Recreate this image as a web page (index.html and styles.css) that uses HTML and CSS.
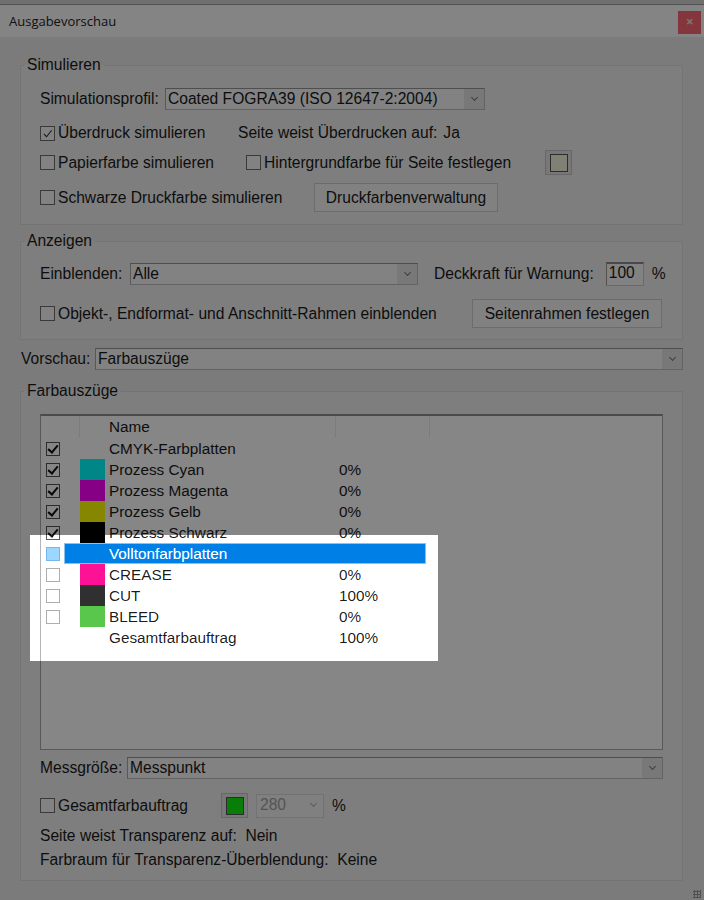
FILE: index.html
```html
<!doctype html>
<html>
<head>
    <meta charset="utf-8">
    <title>Ausgabevorschau</title>
    <link rel="stylesheet" href="styles.css">
</head>
<body>
<div class="window">
    <div class="titlebar">
        <span class="title">Ausgabevorschau</span>
        <button class="close">&#x2715;</button>
    </div>
    <div class="dialog">
        <fieldset class="group">
            <legend>Simulieren</legend>
            <div class="group-body">
                <div class="row r-profile">
                    <span class="label l-profile">Simulationsprofil:</span>
                    <div class="select w-profile"><span class="value">Coated FOGRA39 (ISO 12647-2:2004)</span><span class="arrow"></span></div>
                </div>
                <div class="row r-overprint">
                    <label class="check c-overprint"><span class="box"><svg viewBox="0 0 14 14"><polyline points="3,7.5 6,10.5 11.5,3.5"/></svg></span>Überdruck simulieren</label>
                    <span>Seite weist Überdrucken auf:</span>
                    <span class="val">Ja</span>
                </div>
                <div class="row r-paper">
                    <label class="check c-paper"><span class="box"></span>Papierfarbe simulieren</label>
                    <label class="check c-bg"><span class="box"></span>Hintergrundfarbe für Seite festlegen</label>
                    <button class="swatch"><span class="chip chip-paper"></span></button>
                </div>
                <div class="row r-black">
                    <label class="check c-black"><span class="box"></span>Schwarze Druckfarbe simulieren</label>
                    <button class="btn b-inks">Druckfarbenverwaltung</button>
                </div>
            </div>
        </fieldset>

        <fieldset class="group g-show">
            <legend>Anzeigen</legend>
            <div class="group-body">
                <div class="row r-show">
                    <span class="label l-show">Einblenden:</span>
                    <div class="select w-show"><span class="value">Alle</span><span class="arrow"></span></div>
                    <span class="l-opacity">Deckkraft für Warnung:</span>
                    <div class="input w-opacity">100</div>
                    <span class="unit">%</span>
                </div>
                <div class="row r-frames">
                    <label class="check c-frames"><span class="box"></span>Objekt-, Endformat- und Anschnitt-Rahmen einblenden</label>
                    <button class="btn b-frames">Seitenrahmen festlegen</button>
                </div>
            </div>
        </fieldset>

        <div class="row r-preview">
            <span class="label l-preview">Vorschau:</span>
            <div class="select w-preview"><span class="value">Farbauszüge</span><span class="arrow"></span></div>
        </div>

        <fieldset class="group g-seps">
            <legend>Farbauszüge</legend>
            <div class="group-body">
                <div class="list">
                    <div class="list-head">
                        <span class="col-check"></span>
                        <span class="col-swatch"></span>
                        <span class="col-name">Name</span>
                        <span class="col-pct"></span>
                        <span class="col-rest"></span>
                    </div>
                    <div class="list-row">
                        <span class="col-check"><span class="lbox on"></span></span>
                        <span class="col-swatch"></span>
                        <span class="col-name">CMYK-Farbplatten</span>
                        <span class="col-pct"></span>
                    </div>
                    <div class="list-row">
                        <span class="col-check"><span class="lbox on"></span></span>
                        <span class="col-swatch sw-cyan"></span>
                        <span class="col-name">Prozess Cyan</span>
                        <span class="col-pct">0%</span>
                    </div>
                    <div class="list-row">
                        <span class="col-check"><span class="lbox on"></span></span>
                        <span class="col-swatch sw-magenta"></span>
                        <span class="col-name">Prozess Magenta</span>
                        <span class="col-pct">0%</span>
                    </div>
                    <div class="list-row">
                        <span class="col-check"><span class="lbox on"></span></span>
                        <span class="col-swatch sw-yellow"></span>
                        <span class="col-name">Prozess Gelb</span>
                        <span class="col-pct">0%</span>
                    </div>
                    <div class="list-row">
                        <span class="col-check"><span class="lbox on"></span></span>
                        <span class="col-swatch sw-black"></span>
                        <span class="col-name">Prozess Schwarz</span>
                        <span class="col-pct">0%</span>
                    </div>
                    <div class="list-row selected">
                        <span class="col-check"><span class="lbox partial"></span></span>
                        <span class="sel-bar">Volltonfarbplatten</span>
                    </div>
                    <div class="list-row">
                        <span class="col-check"><span class="lbox"></span></span>
                        <span class="col-swatch sw-crease"></span>
                        <span class="col-name">CREASE</span>
                        <span class="col-pct">0%</span>
                    </div>
                    <div class="list-row">
                        <span class="col-check"><span class="lbox"></span></span>
                        <span class="col-swatch sw-cut"></span>
                        <span class="col-name">CUT</span>
                        <span class="col-pct">100%</span>
                    </div>
                    <div class="list-row">
                        <span class="col-check"><span class="lbox"></span></span>
                        <span class="col-swatch sw-bleed"></span>
                        <span class="col-name">BLEED</span>
                        <span class="col-pct">0%</span>
                    </div>
                    <div class="list-row">
                        <span class="col-check"></span>
                        <span class="col-swatch"></span>
                        <span class="col-name">Gesamtfarbauftrag</span>
                        <span class="col-pct">100%</span>
                    </div>
                </div>

                <div class="row r-measure">
                    <span class="label l-measure">Messgröße:</span>
                    <div class="select w-measure"><span class="value">Messpunkt</span><span class="arrow"></span></div>
                </div>
                <div class="row r-total">
                    <label class="check c-total"><span class="box"></span>Gesamtfarbauftrag</label>
                    <button class="swatch"><span class="chip chip-green"></span></button>
                    <div class="select w-limit disabled"><span class="value">280</span><span class="arrow"></span></div>
                    <span class="unit">%</span>
                </div>
                <div class="info i-first">Seite weist Transparenz auf:&nbsp; Nein</div>
                <div class="info">Farbraum für Transparenz-Überblendung:&nbsp; Keine</div>
            </div>
        </fieldset>
    </div>
    <div class="grip"></div>
    <!-- highlighted area around the spot colour rows -->
    <div class="spotlight"></div>
</div>
</body>
</html>
```

FILE: styles.css
```css
html, body {
    margin: 0;
    padding: 0;
}
body {
    background: #d4d4d4;
    font-family: "Liberation Sans", Arial, sans-serif;
    font-size: 15.6px;
    color: #1a1a1a;
    overflow: hidden;
}
.window {
    position: relative;
    margin-top: 4px;
    width: 704px;
    height: 896px;
    background: #ebebeb;
    border-top: 1px solid #9a9a9a;
    box-sizing: border-box;
}
.titlebar {
    height: 32px;
    background: #fcfcfc;
    display: flex;
    align-items: center;
    justify-content: space-between;
    padding: 0 3px 0 9px;
}
.title {
    font-family: "Open Sans", "Noto Sans", sans-serif;
    font-size: 13px;
    color: #222;
}
.close {
    width: 23px;
    height: 23px;
    margin-top: 2px;
    border: none;
    background: #f96a72;
    color: #fbe2e2;
    font-size: 9px;
    font-weight: bold;
    padding: 0;
}
.dialog {
    padding: 19px 21px 0 20px;
}

/* group boxes */
.group {
    margin: 0;
    padding: 0;
    border: 1px solid #dcdcdc;
    background: #f0f0f0;
    min-width: 0;
}
.group legend {
    margin-left: 3px;
    padding: 0 3px;
    line-height: 18px;
    font-size: 15.6px;
}
.group-body {
    padding: 0 19px 12px 19px;
}
.g-show {
    margin-top: 7px;
}
.g-show .group-body {
    padding-bottom: 11px;
}
.g-seps {
    margin-top: 12px;
}
.g-seps .group-body {
    padding-bottom: 11px;
}

.row {
    display: flex;
    align-items: center;
    white-space: nowrap;
}
.row > * {
    flex-shrink: 0;
}
.r-profile { height: 22px; margin-top: 14px; }
.r-overprint { height: 22px; margin-top: 12px; }
.r-paper { height: 25px; margin-top: 6px; }
.r-black { height: 29px; margin-top: 8px; }
.r-show { height: 24px; margin-top: 12px; }
.r-frames { height: 29px; margin-top: 13px; }
.r-preview { height: 22px; margin-top: 8px; }
.r-measure { height: 22px; margin-top: 7px; }
.r-total { height: 25px; margin-top: 14px; }

.val {
    margin-left: 6px;
}

/* checkboxes */
.check {
    display: flex;
    align-items: center;
}
.box {
    width: 13px;
    height: 13px;
    border: 1px solid #6e6e6e;
    background: #f8f8f8;
    margin-right: 3px;
    display: flex;
}
.box svg {
    width: 13px;
    height: 13px;
    fill: none;
    stroke: #333;
    stroke-width: 1.2;
}
.c-overprint { width: 198px; }
.c-paper { width: 206px; }
.c-bg { width: 299px; }
.c-black { width: 274px; }
.c-frames { width: 432px; }
.c-total { width: 181px; }

/* dropdowns */
.select {
    height: 22px;
    box-sizing: border-box;
    display: flex;
    background: #f7f7f7;
    border: 1px solid #bcbcbc;
    border-top-color: #959595;
    border-left-color: #a8a8a8;
}
.select .value {
    flex: 1;
    padding-left: 2px;
    line-height: 19px;
    overflow: hidden;
}
.select .arrow {
    width: 20px;
    background: #e4e4e4;
    position: relative;
}
.select .arrow::after {
    content: "";
    position: absolute;
    left: 8px;
    top: 6px;
    width: 4px;
    height: 4px;
    border-right: 1px solid #777;
    border-bottom: 1px solid #777;
    transform: rotate(45deg);
}
.w-profile { width: 320px; }
.w-show { width: 288px; }
.w-preview { flex: 1; }
.w-measure { flex: 1; }
.w-limit {
    width: 68px;
    height: 24px;
    margin-left: 8px;
    background: #f3f3f3;
    border-color: #dadada;
}
.w-limit .value {
    color: #a0a0a0;
    padding-left: 3px;
    line-height: 20px;
}
.w-limit .arrow {
    background: #f3f3f3;
}
.w-limit .arrow::after {
    border-color: #b0b0b0;
}

.l-profile { width: 125px; }
.l-show { width: 90px; }
.l-opacity { margin-left: 16px; }
.l-preview {
    width: 74px;
    margin-left: 1px;
}
.l-measure { width: 87px; }

.input {
    width: 38px;
    height: 24px;
    box-sizing: border-box;
    margin-left: 12px;
    background: #f7f7f7;
    border: 1px solid #c8c8c8;
    border-top: 2px solid #8c8c8c;
    border-left-color: #9a9a9a;
    padding-left: 2px;
    line-height: 18px;
}
.unit {
    margin-left: 8px;
}

/* buttons */
.btn {
    height: 29px;
    font-family: inherit;
    font-size: 15.6px;
    color: #1a1a1a;
    background: #f5f5f5;
    border: 1px solid #cdcdcd;
    padding: 0;
}
.b-inks { width: 184px; }
.b-frames { width: 190px; }
.swatch {
    width: 27px;
    height: 25px;
    padding: 0;
    background: #e4e4e4;
    border: 1px solid #c4c4c4;
    display: flex;
    align-items: center;
    justify-content: center;
}
.chip {
    width: 16px;
    height: 16px;
    border: 1px solid #555;
}
.chip-paper { background: #f4f4dc; }
.chip-green { background: #10ee10; }

/* separations list */
.list {
    margin-top: 14px;
    height: 336px;
    box-sizing: border-box;
    background: #fff;
    border: 1px solid #a9a9a9;
    border-top: 2px solid #8f8f8f;
    font-size: 15.3px;
}
.list-head, .list-row {
    display: flex;
    align-items: center;
    white-space: nowrap;
}
.list-head {
    height: 22px;
}
.list-row {
    height: 21px;
    line-height: 22px;
}
.col-check {
    width: 39px;
    height: 100%;
    display: flex;
    align-items: center;
    padding-left: 5px;
    box-sizing: border-box;
}
.col-swatch {
    width: 25px;
    height: 100%;
    margin-right: 4px;
}
.col-name {
    width: 226px;
}
.col-pct {
    width: 90px;
    padding-left: 4px;
}
.list-head .col-check,
.list-head .col-pct {
    border-right: 1px solid #ececec;
}
.list-head .col-name {
    width: 226px;
    border-right: 1px solid #ececec;
    height: 100%;
    line-height: 22px;
}
.list-head .col-swatch {
    margin-right: 0;
    width: 29px;
}
.list-head .col-pct {
    height: 100%;
    width: 89px;
}
.sw-cyan { background: #00ffff; }
.sw-magenta { background: #ff00ff; }
.sw-yellow { background: #ffff00; }
.sw-black { background: #000; }
.sw-crease { background: #ec118c; }
.sw-cut { background: #2d2d2d; }
.sw-bleed { background: #53b947; }

.lbox {
    width: 12px;
    height: 12px;
    border: 1px solid #a3a3a3;
    background: #fff;
}
.lbox.on {
    border-color: #555;
    position: relative;
}
.lbox.on::after {
    content: "";
    position: absolute;
    left: 3px;
    top: 0;
    width: 4px;
    height: 8px;
    border-right: 2px solid #111;
    border-bottom: 2px solid #111;
    transform: rotate(40deg);
}
.lbox.partial {
    background: #91c9f7;
    border-color: #6fa8d8;
}
.selected .col-check {
    width: 23px;
}
.sel-bar {
    width: 362px;
    height: 21px;
    box-sizing: border-box;
    background: #0078d7;
    border: 1px solid #7fb5e3;
    color: #fff;
    padding-left: 44px;
    line-height: 19px;
}

.info {
    margin-top: 6px;
    line-height: 18px;
}
.i-first {
    margin-top: 9px;
}

.grip {
    position: absolute;
    right: 3px;
    bottom: 2px;
    width: 8px;
    height: 8px;
    background: radial-gradient(circle, #999 1px, transparent 1.2px) 0 0 / 3px 3px;
}

/* dim everything except the marked rows */
.spotlight {
    position: absolute;
    left: 30px;
    top: 530px;
    width: 408px;
    height: 126px;
    box-shadow: 0 0 0 1200px rgba(0, 0, 0, 0.475);
    backdrop-filter: brightness(1.07);
    pointer-events: none;
}
```
